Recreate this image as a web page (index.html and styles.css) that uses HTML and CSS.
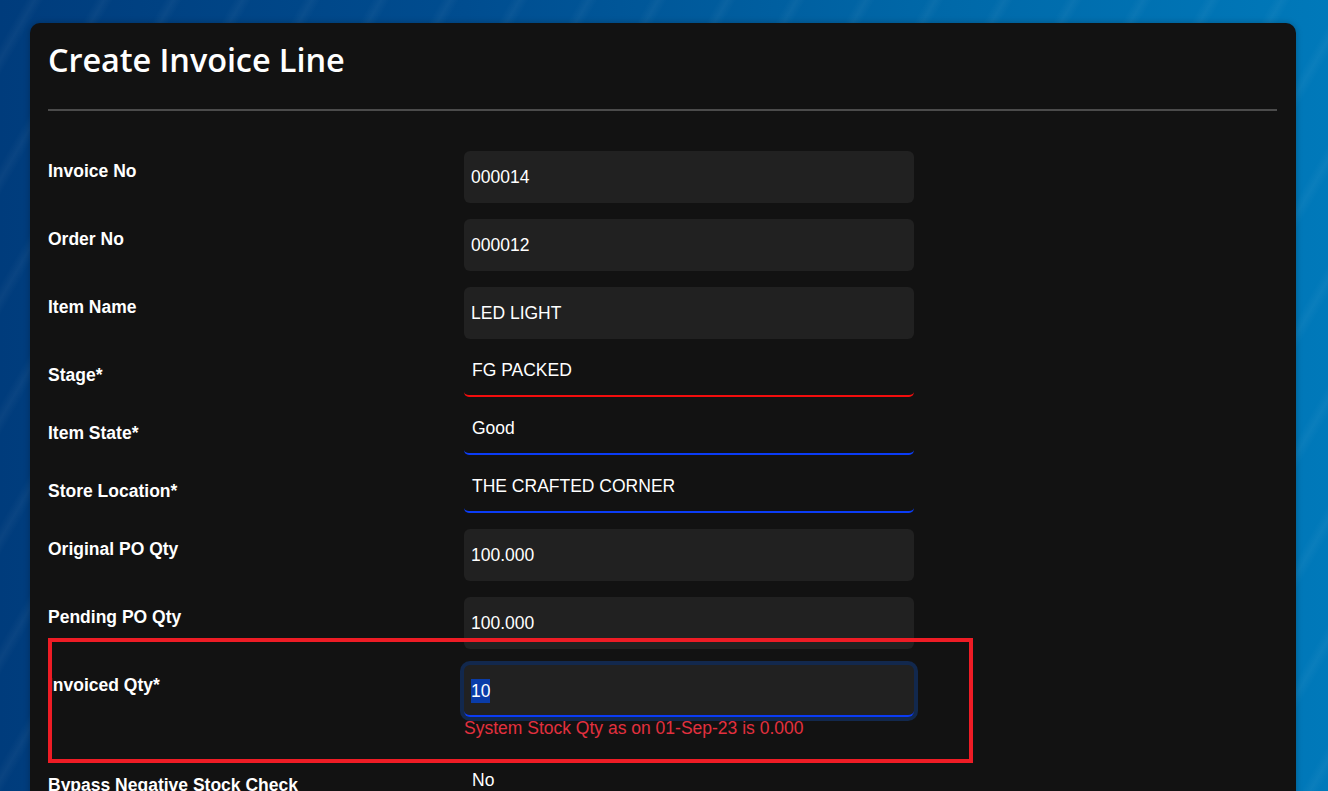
FILE: index.html
```html
<!DOCTYPE html>
<html lang="en">
<head>
<meta charset="utf-8">
<title>Create Invoice Line</title>
<link rel="stylesheet" href="styles.css">
</head>
<body>
<div class="card">
  <h1 class="title">Create Invoice Line</h1>
  <hr class="divider">
  <form class="form">
    <div class="row">
      <label class="label">Invoice No</label>
      <div class="field"><div class="input">000014</div></div>
    </div>
    <div class="row">
      <label class="label">Order No</label>
      <div class="field"><div class="input">000012</div></div>
    </div>
    <div class="row">
      <label class="label">Item Name</label>
      <div class="field"><div class="input">LED LIGHT</div></div>
    </div>
    <div class="row">
      <label class="label">Stage*</label>
      <div class="field"><div class="select select-error">FG PACKED</div></div>
    </div>
    <div class="row">
      <label class="label">Item State*</label>
      <div class="field"><div class="select select-ok">Good</div></div>
    </div>
    <div class="row">
      <label class="label">Store Location*</label>
      <div class="field"><div class="select select-ok">THE CRAFTED CORNER</div></div>
    </div>
    <div class="row">
      <label class="label">Original PO Qty</label>
      <div class="field"><div class="input">100.000</div></div>
    </div>
    <div class="row">
      <label class="label">Pending PO Qty</label>
      <div class="field"><div class="input">100.000</div></div>
    </div>
    <div class="row row-highlight">
      <label class="label">Invoiced Qty*</label>
      <div class="field">
        <div class="input input-focus"><span class="sel">10</span></div>
        <div class="error">System Stock Qty as on 01-Sep-23 is 0.000</div>
      </div>
      <div class="annotation"></div>
    </div>
    <div class="row row-plain">
      <label class="label">Bypass Negative Stock Check</label>
      <div class="field"><div class="plain">No</div></div>
    </div>
  </form>
</div>
</body>
</html>
```

FILE: styles.css
```css
html, body {
  margin: 0;
  height: 100%;
  overflow: hidden;
}
body {
  background:
    repeating-linear-gradient(120deg, rgba(255,255,255,0) 0px, rgba(255,255,255,0) 22px, rgba(255,255,255,0.04) 30px, rgba(255,255,255,0) 38px, rgba(255,255,255,0) 60px),
    linear-gradient(90deg, #003c7c 0%, #004d90 35%, #0068a8 70%, #0079ba 100%);
  padding: 23px 32px 0 30px;
  box-sizing: border-box;
  font-family: "Liberation Sans", Arial, sans-serif;
  color: #fff;
}
.card {
  background: #121212;
  border-radius: 10px 10px 0 0;
  padding: 0 19px 0 18px;
  height: 800px;
  box-shadow: 0 0 6px rgba(0,0,0,0.25);
}
.title {
  margin: 0;
  padding-top: 16px;
  font-family: "Open Sans", sans-serif;
  font-weight: 600;
  font-size: 32.5px;
  line-height: 42px;
  height: 42px;
  letter-spacing: -0.1px;
}
.divider {
  margin: 28px 0 40px 0;
  border: 0;
  height: 2px;
  background: #4b4b4b;
}
.form {
  display: flex;
  flex-direction: column;
  gap: 16px;
}
.row {
  display: grid;
  grid-template-columns: 416px 450px;
  position: relative;
}
.label {
  font-weight: bold;
  font-size: 17.5px;
  line-height: 20px;
  padding-top: 10px;
}
.input {
  height: 52px;
  box-sizing: border-box;
  background: #212121;
  border-radius: 6px;
  padding: 0 7px;
  font-size: 17.5px;
  display: flex;
  align-items: center;
}
.select {
  height: 42px;
  box-sizing: border-box;
  padding: 5px 8px 0 8px;
  font-size: 17.5px;
  line-height: 20px;
  border-bottom: 2px solid #1538ff;
  border-radius: 0 0 5px 5px;
}
.select-error {
  border-bottom-color: #f30d0d;
}
.select-ok {
  border-bottom-color: #0b3cf5;
}
.input-focus {
  border-bottom: 2px solid #0b3cf5;
  box-shadow: 0 0 0 4px #12284d;
  padding-top: 2px;
}
.sel {
  background: #0a3ca8;
  line-height: 24px;
}
.error {
  color: #e2303f;
  font-size: 17.5px;
  line-height: 19px;
  margin-top: 2px;
}
.row-highlight {
  margin-bottom: 11px;
}
.annotation {
  position: absolute;
  left: 0;
  top: -27px;
  width: 925px;
  height: 125px;
  box-sizing: border-box;
  border: 4px solid #ee1c25;
  pointer-events: none;
}
.plain {
  padding: 5px 8px 0 8px;
  font-size: 17.5px;
  line-height: 20px;
}
```
